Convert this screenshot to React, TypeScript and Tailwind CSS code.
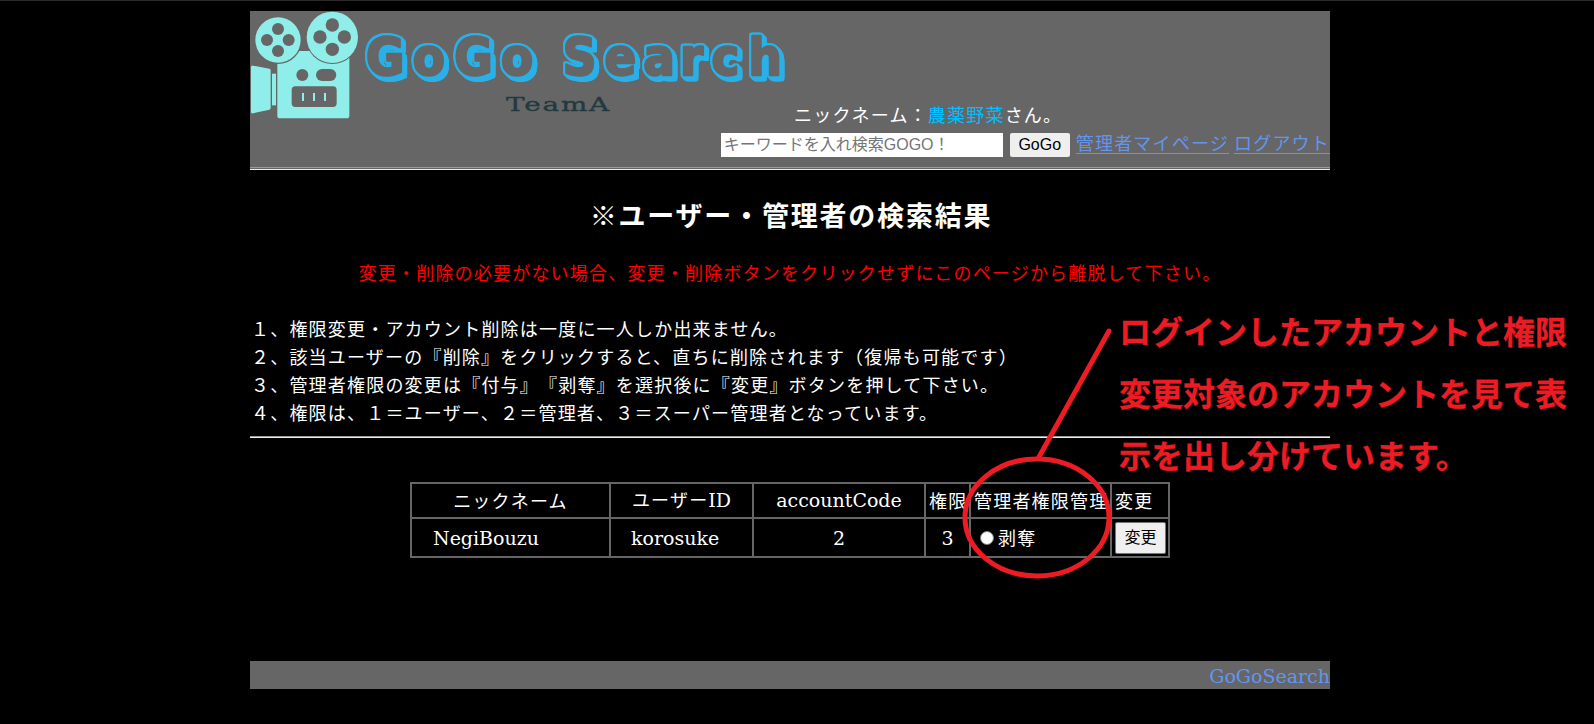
function Logo() {
  return (
    <svg className="block h-[110px] w-[540px]" viewBox="250 11 540 110" aria-label="GoGo Search TeamA">
      <g transform="translate(240 0) scale(0.33333)" fill="#90eeea">
        <rect x="112" y="153" width="216" height="202" rx="8" />
        <circle cx="114" cy="120" r="72" fill="#666" />
        <circle cx="277" cy="112" r="80" fill="#666" />
        <circle cx="114" cy="120" r="68" />
        <circle cx="277" cy="112" r="77" />
        <path d="M33 202q0-6 6-5l49 9q4 1 4 5v113q0 4-4 5l-49 11q-6 1-6-4z" />
        <rect x="96" y="221" width="12" height="95" />
        <g fill="#666">
          <circle cx="114" cy="87" r="18" />
          <circle cx="114" cy="153" r="18" />
          <circle cx="81" cy="120" r="18" />
          <circle cx="146" cy="120" r="18" />
          <circle cx="277" cy="75" r="20" />
          <circle cx="277" cy="148" r="20" />
          <circle cx="240" cy="111" r="20" />
          <circle cx="313" cy="111" r="20" />
          <circle cx="187" cy="225" r="18" />
          <rect x="228" y="207" width="61" height="36" rx="18" />
          <rect x="155" y="259" width="135" height="62" rx="11" />
        </g>
        <rect x="186" y="279" width="6" height="24" />
        <rect x="219" y="279" width="6" height="24" />
        <rect x="252" y="279" width="6" height="24" />
      </g>
      <g className="[filter:drop-shadow(1.3px_0_0_#29b0e8)_drop-shadow(-1.3px_0_0_#29b0e8)_drop-shadow(0_1.3px_0_#29b0e8)_drop-shadow(0_-1.3px_0_#29b0e8)_drop-shadow(1px_1px_0_#29b0e8)_drop-shadow(2px_2px_0_#29b0e8)_drop-shadow(1px_1px_0_#29b0e8)]">
        <text
          transform="translate(366 75) scale(0.9 1)"
          x="0 52 98 150 190 218.5 265 308 349 384 425"
          y="0"
          fill="#666"
          stroke="#666"
          strokeWidth="2.5"
          strokeLinejoin="round"
          fontFamily="'DejaVu Sans', sans-serif"
          fontWeight="700"
          fontSize="52"
        >
          GoGo Search
        </text>
      </g>
      <text
        x="506"
        y="111"
        fill="#1f3a40"
        stroke="#1f3a40"
        strokeWidth="0.35"
        fontFamily="'DejaVu Serif', serif"
        fontSize="18"
        textLength="105"
        lengthAdjust="spacingAndGlyphs"
      >
        TeamA
      </text>
    </svg>
  );
}

const NOTES = [
  "１、権限変更・アカウント削除は一度に一人しか出来ません。",
  "２、該当ユーザーの『削除』をクリックすると、直ちに削除されます（復帰も可能です）",
  "３、管理者権限の変更は『付与』『剥奪』を選択後に『変更』ボタンを押して下さい。",
  "４、権限は、１＝ユーザー、２＝管理者、３＝スーパー管理者となっています。",
];

const CELL = "border-2 border-[#666] p-0 font-normal whitespace-nowrap";
const LATIN = "font-['DejaVu_Serif','Noto_Sans_CJK_JP',serif] text-[19px] tracking-normal";

export default function App() {
  return (
    <div className="relative h-[724px] w-full overflow-hidden border-t border-[#2a2a2a] bg-black pt-[10px] font-['Noto_Sans_CJK_JP',sans-serif] text-[18px] tracking-[1.2px] text-white [text-spacing-trim:space-all]">
      <div className="ml-[250px] flex w-[1080px] flex-col">
        <header className="flex h-[159px] flex-col bg-[#666]">
          <div className="flex h-[118px]">
            <Logo />
            <p className="mt-[89px] ml-[4px] h-7 leading-7 whitespace-nowrap">
              ニックネーム：<span className="text-[#00bfff]">農薬野菜</span>さん。
            </p>
          </div>
          <form className="flex h-[38px] items-start justify-end pt-1">
            <input
              className="h-6 w-[282px] bg-white px-[3px] pb-px font-['Liberation_Sans','Noto_Sans_CJK_JP',sans-serif] text-[16px] tracking-normal text-black placeholder:text-[#757575]"
              placeholder="キーワードを入れ検索GOGO！"
            />
            <button
              type="button"
              className="ml-[7px] h-6 w-[60px] rounded-[2px] bg-[#efefef] font-['Liberation_Sans',sans-serif] text-[16px] leading-6 tracking-normal text-black"
            >
              GoGo
            </button>
            <a className="ml-[6px] leading-[18px] text-[#6495ed] underline underline-offset-[3px]">管理者マイページ</a>
            <a className="ml-[5px] leading-[18px] text-[#6495ed] underline underline-offset-[3px]">ログアウト</a>
          </form>
          <div className="h-[3px] border-t border-b border-t-[#9a9a9a] border-b-[#eee]" />
        </header>

        <h1 className="mt-[25px] h-10 pl-[2px] text-center text-[27px] leading-10 font-bold tracking-[1.8px]">
          ※ユーザー・管理者の検索結果
        </h1>
        <p className="mt-[23px] h-7 text-center leading-7 text-[#f00]">
          変更・削除の必要がない場合、変更・削除ボタンをクリックせずにこのページから離脱して下さい。
        </p>
        <ol className="mt-7 pl-px">
          {NOTES.map((note) => (
            <li key={note} className="h-7 leading-7 whitespace-nowrap">
              {note}
            </li>
          ))}
        </ol>
        <div className="mt-[10px] h-[2px] border-t border-b border-t-[#9a9a9a] border-b-[#eee]" />

        <table className="mx-auto mt-[44px] w-[760px] table-fixed border-collapse">
          <colgroup>
            <col className="w-[199px]" />
            <col className="w-[143px]" />
            <col className="w-[172px]" />
            <col className="w-[45px]" />
            <col className="w-[141px]" />
            <col className="w-[58px]" />
          </colgroup>
          <thead>
            <tr className="h-[35px] leading-7">
              <th className={`${CELL} pb-[2px]`}>ニックネーム</th>
              <th className={`${CELL} pb-[2px]`}>
                ユーザー<span className={LATIN}>ID</span>
              </th>
              <th className={`${CELL} pb-[2px]`}>
                <span className={LATIN}>accountCode</span>
              </th>
              <th className={`${CELL} pb-[2px]`}>
                <div className="flex pl-[3px]">権限</div>
              </th>
              <th className={`${CELL} pb-[2px]`}>
                <div className="flex pl-[3px]">管理者権限管理</div>
              </th>
              <th className={`${CELL} pb-[2px]`}>
                <div className="flex pl-[3px]">変更</div>
              </th>
            </tr>
          </thead>
          <tbody>
            <tr className="h-[39px] leading-7">
              <td className={CELL}>
                <span className={`${LATIN} pl-[21px]`}>NegiBouzu</span>
              </td>
              <td className={CELL}>
                <span className={`${LATIN} pl-[20px]`}>korosuke</span>
              </td>
              <td className={`${CELL} text-center`}>
                <span className={LATIN}>2</span>
              </td>
              <td className={`${CELL} text-center`}>
                <span className={LATIN}>3</span>
              </td>
              <td className={CELL}>
                <label className="flex items-center pl-[9px]">
                  <span className="mr-[4px] size-[14px] rounded-full border border-[#767676] bg-white" />
                  <span className="-mt-[2px]">剥奪</span>
                </label>
              </td>
              <td className={CELL}>
                <button
                  type="button"
                  className="ml-[3px] block h-8 w-[51px] rounded-[2px] border border-[#767676] bg-[#efefef] pb-[4px] text-[16px] leading-[26px] tracking-normal text-black"
                >
                  変更
                </button>
              </td>
            </tr>
          </tbody>
        </table>

        <footer className="mt-[103px] flex h-7 justify-end bg-[#666] leading-[31px]">
          <a className="font-['DejaVu_Serif',serif] text-[19px] tracking-normal text-[#6495ed]">GoGoSearch</a>
        </footer>
      </div>

      <svg className="absolute -top-px left-0 h-[724px] w-[1594px]" viewBox="0 0 1594 724" fill="none" stroke="#ed1c24" strokeWidth="5">
        <ellipse cx="1037" cy="517.5" rx="72" ry="58.5" />
        <path d="M1109 331L1039 457" strokeLinecap="round" />
      </svg>
      <p className="absolute top-[298px] left-[1119px] w-[460px] text-[32px] leading-[62px] font-bold tracking-normal text-[#ed1c24] [-webkit-text-stroke:0.3px_#ed1c24]">
        ログインしたアカウントと権限
        <br />
        変更対象のアカウントを見て表
        <br />
        示を出し分けています。
      </p>
    </div>
  );
}
